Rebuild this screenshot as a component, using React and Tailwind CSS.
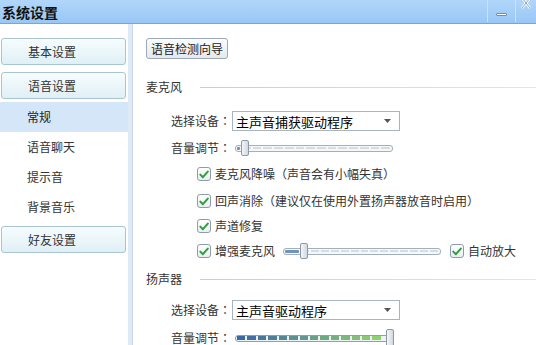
import React from 'react'

const font = "font-['Microsoft_YaHei','Noto_Sans_CJK_SC',sans-serif]"

const Check = ({ className = '' }) => (
  <span className={`flex h-[14px] w-[14px] shrink-0 items-center justify-center rounded-[3px] border border-[#8e9caa] bg-gradient-to-b from-white to-[#e9eef3] ${className}`}>
    <svg width="10" height="9" viewBox="0 0 10 9">
      <path d="M1.3 4.6 L3.9 7.2 L8.8 1.6" fill="none" stroke="#2f9e3c" strokeWidth="2" strokeLinecap="round" strokeLinejoin="round" />
    </svg>
  </span>
)

const Dashes = ({ count }) => (
  <div className="flex flex-1 gap-[2px] px-[2px]">
    {Array.from({ length: count }).map((_, i) => (
      <span key={i} className="h-[2px] flex-1 bg-[#d6dce3]" />
    ))}
  </div>
)

const MicSlider = ({ width, pos }) => (
  <div className="relative flex h-[7px] items-center rounded-[3px] border border-[#a3afbb] bg-[#f5f7f9]" style={{ width }}>
    <span className="ml-[1px] h-[3px] rounded-[1px] bg-[#6e93bd]" style={{ width: pos - 2 }} />
    <Dashes count={14} />
    <span className="absolute top-1/2 h-[16px] w-[8px] -translate-y-1/2 rounded-[2px] border border-[#8c99a6] bg-gradient-to-r from-[#f4f6f8] to-[#d3d9df]" style={{ left: pos }} />
  </div>
)

const SpeakerSlider = () => {
  const segs = 14
  const from = [58, 105, 168]
  const to = [140, 210, 110]
  return (
    <div className="relative flex h-[7px] w-[158px] items-center gap-[2px] rounded-[3px] border border-[#8fa0b2] bg-[#eef2f5] px-[1px]">
      {Array.from({ length: segs }).map((_, i) => {
        const t = i / (segs - 1)
        const c = from.map((v, k) => Math.round(v + (to[k] - v) * t))
        return <span key={i} className="h-[4px] flex-1" style={{ background: `rgb(${c[0]},${c[1]},${c[2]})` }} />
      })}
      <span className="w-[8px] shrink-0" />
      <span className="absolute right-[-2px] top-1/2 h-[18px] w-[8px] -translate-y-1/2 rounded-[2px] border border-[#8c99a6] bg-gradient-to-r from-[#f4f6f8] to-[#d3d9df]" />
    </div>
  )
}

const Select = ({ text }) => (
  <div className="flex h-[20px] w-[168px] items-center justify-between border border-[#a7b5c3] bg-white pl-[3px] pr-[8px] text-[13px] text-black">
    <span className="leading-none">{text}</span>
    <svg width="7" height="4" viewBox="0 0 7 4"><path d="M0 0 H7 L3.5 4 Z" fill="#555" /></svg>
  </div>
)

// label with a centred full-width colon, as on the Windows dialog
const Label = ({ text, width }) => (
  <span className="flex shrink-0 leading-none" style={{ width }}>
    {text}
    <span className="w-[12px] text-center font-['Noto_Sans_CJK_TC',sans-serif]">：</span>
  </span>
)

const SideButton = ({ label }) => (
  <div className="flex h-[27px] items-center rounded-[3px] border border-[#a9c5d3] bg-gradient-to-b from-[#f7fcfe] to-[#dff0f5] pl-[26px] text-[12px] text-[#333]">
    {label}
  </div>
)

const SubItem = ({ label, active }) => (
  <div className={`flex h-[30px] items-center pl-[27px] text-[12px] ${active ? 'bg-[#d5e6f8] text-[#222]' : 'text-[#333]'}`}>
    {label}
  </div>
)

const Heading = ({ label, className = '' }) => (
  <div className={`flex h-[16px] items-center text-[12px] text-[#333] ${className}`}>
    <span className="w-[36px] shrink-0">{label}</span>
    <span className="ml-[18px] h-px flex-1 bg-gradient-to-r from-[#c3d0dc] to-[#dfe6ed]" />
  </div>
)

const CheckRow = ({ label, className = '' }) => (
  <div className={`ml-[51px] flex h-[20px] items-center gap-[4px] text-[12px] text-[#333] ${className}`}>
    <Check />
    <span>{label}</span>
  </div>
)

export default function App() {
  return (
    <div className={`flex h-[345px] w-[536px] flex-col overflow-hidden bg-white ${font}`}>
      {/* title bar */}
      <div className="flex h-[24px] shrink-0 items-center border-b border-[#7fa5cd] bg-gradient-to-b from-[#b1d6fa] to-[#99c7f5]">
        <span className="ml-[2px] text-[14px] font-bold leading-none text-[#111]">系统设置</span>
        <div className="ml-auto flex h-full items-start">
          <span className="h-[22px] w-px bg-[#c9e1fa]" />
          <span className="flex h-[22px] w-[27px] items-start justify-center pt-[13px]">
            <span className="h-[3px] w-[11px] rounded-[1px] border border-[#6f8eae] bg-white" />
          </span>
          <span className="h-[22px] w-px bg-[#c9e1fa]" />
          <span className="flex h-[12px] w-[20px] items-start justify-center">
            <svg width="12" height="10" viewBox="0 0 12 10">
              <path d="M2 -2 L10 8 M10 -2 L2 8" stroke="#fff" strokeWidth="2.4" />
              <path d="M2 -2 L10 8 M10 -2 L2 8" stroke="#6f8eae" strokeWidth="0.8" />
            </svg>
          </span>
        </div>
      </div>

      <div className="flex flex-1">
        {/* sidebar */}
        <div className="flex w-[128px] shrink-0 flex-col pt-[14px]">
          <div className="flex flex-col gap-[7px] pl-[1px] pr-[2px]">
            <SideButton label="基本设置" />
            <SideButton label="语音设置" />
          </div>
          <div className="mt-[3px]">
            <SubItem label="常规" active />
            <SubItem label="语音聊天" />
            <SubItem label="提示音" />
            <SubItem label="背景音乐" />
          </div>
          <div className="mt-[4px] pl-[1px] pr-[2px]">
            <SideButton label="好友设置" />
          </div>
        </div>
        <div className="w-[5px] shrink-0 border-r border-[#c6d8ea] bg-[#dfeaf7]" />

        {/* content */}
        <div className="flex flex-1 flex-col pl-[13px] pt-[14px]">
          <div className="flex h-[21px] w-[82px] items-center justify-center rounded-[3px] border border-[#9aaab8] bg-gradient-to-b from-[#fbfcfd] to-[#e4e9ee] text-[12px] text-[#222]">
            语音检测向导
          </div>

          <Heading label="麦克风" className="mt-[20px]" />

          <div className="ml-[25px] mt-[16px] flex items-center text-[12px] text-[#333]">
            <Label text="选择设备" width={61} />
            <Select text="主声音捕获驱动程序" />
          </div>

          <div className="ml-[25px] mt-[9px] flex h-[16px] items-center text-[12px] text-[#333]">
            <Label text="音量调节" width={64} />
            <MicSlider width={158} pos={5} />
          </div>

          <CheckRow label="麦克风降噪（声音会有小幅失真）" className="mt-[8px]" />
          <CheckRow label="回声消除（建议仅在使用外置扬声器放音时启用）" className="mt-[7px]" />
          <CheckRow label="声道修复" className="mt-[5px]" />
          <div className="ml-[51px] mt-[5px] flex h-[20px] items-center text-[12px] text-[#333]">
            <Check />
            <span className="ml-[4px] w-[68px]">增强麦克风</span>
            <MicSlider width={158} pos={16} />
            <Check className="ml-[9px]" />
            <span className="ml-[4px]">自动放大</span>
          </div>

          <Heading label="扬声器" className="mt-[10px]" />

          <div className="ml-[25px] mt-[13px] flex items-center text-[12px] text-[#333]">
            <Label text="选择设备" width={61} />
            <Select text="主声音驱动程序" />
          </div>

          <div className="ml-[25px] mt-[11px] flex h-[14px] items-center text-[12px] text-[#333]">
            <Label text="音量调节" width={64} />
            <SpeakerSlider />
          </div>
        </div>
      </div>
    </div>
  )
}
